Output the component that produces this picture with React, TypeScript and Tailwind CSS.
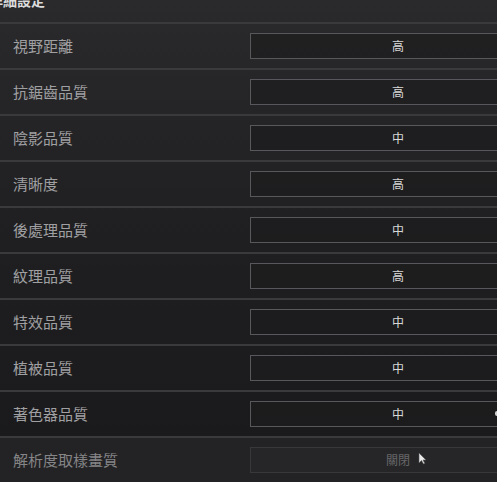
import React from 'react';

const ROWS: { label: string; value: string; mark?: boolean }[] = [
  { label: '視野距離', value: '高' },
  { label: '抗鋸齒品質', value: '高' },
  { label: '陰影品質', value: '中' },
  { label: '清晰度', value: '高' },
  { label: '後處理品質', value: '中' },
  { label: '紋理品質', value: '高' },
  { label: '特效品質', value: '中' },
  { label: '植被品質', value: '中' },
  { label: '著色器品質', value: '中', mark: true },
];

const FONT = { fontFamily: '"Noto Sans CJK TC", "Noto Sans", sans-serif' };

function Row({ label, value, last, mark }: { label: string; value: string; last?: boolean; mark?: boolean }) {
  return (
    <div className="flex flex-col">
      <div className="h-[2px] bg-[#3a3a3d]" />
      <div className={`h-[44px] flex items-center ${last ? 'bg-[#232325]' : ''}`}>
        <div className={`w-[250px] pl-[13px] text-[15px] ${last ? 'text-[#858587]' : 'text-[#a0a0a2]'}`}>
          {label}
        </div>
        <div
          className={`relative w-[296px] h-[26px] shrink-0 flex items-center justify-center text-[12px] border-[1.5px] ${
            last
              ? 'border-[#38383b] bg-[#262628] text-[#666668]'
              : 'border-[#58585c] bg-[#1c1c1e]/70 text-[#d8d8d8]'
          }`}
        >
          {value}
          {mark && <span className="absolute left-[244px] top-[9px] w-[4px] h-[5px] rounded-full bg-[#d0d0d0]" />}
          {last && (
            <svg className="absolute left-[167px] top-[4px]" width="9" height="13" viewBox="0 0 9 13">
              <path d="M1 1 L1 11 L3.5 8.5 L5.5 12 L6.8 11.3 L5 8 L8 8 Z" fill="#e8e8e8" stroke="#555" strokeWidth="0.6" />
            </svg>
          )}
        </div>
      </div>
    </div>
  );
}

export default function App() {
  return (
    <div
      className="w-[497px] h-[482px] overflow-hidden bg-gradient-to-b from-[#2a2a2c] via-[#1f1f21] to-[#19191b]"
      style={FONT}
    >
      <div className="w-[560px]">
        {/* Title, cut off at the top edge as in the capture */}
        <div className="h-[22px] flex items-start">
          <div className="ml-[-11px] mt-[-9px] text-[14px] font-bold text-[#dcdcdc] leading-[18px]">
            詳細設定
          </div>
        </div>
        {ROWS.map((r) => (
          <Row key={r.label} label={r.label} value={r.value} mark={r.mark} />
        ))}
        <Row label="解析度取樣畫質" value="關閉" last />
        <div className="h-[2px] bg-[#2a2a2d]" />
      </div>
    </div>
  );
}
